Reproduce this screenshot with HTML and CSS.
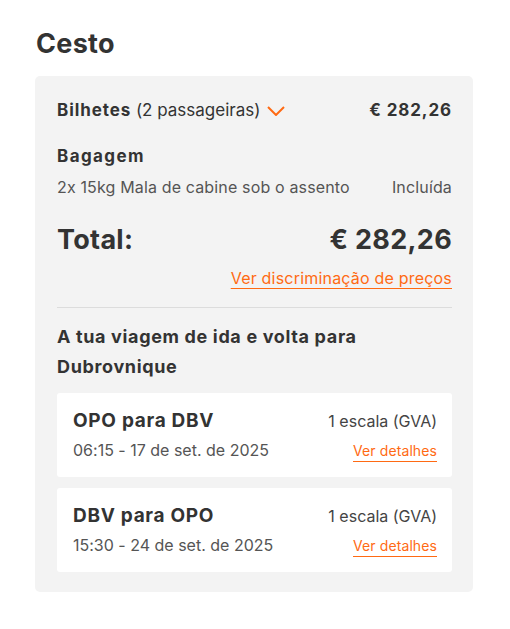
FILE: index.html
```html
<!DOCTYPE html>
<html lang="pt">
<head>
<meta charset="utf-8">
<link rel="stylesheet" href="styles.css">
</head>
<body>
<main class="basket">
  <h1 class="title">Cesto</h1>
  <section class="card">
    <div class="row tickets">
      <div class="tickets-label">
        <span><strong>Bilhetes</strong> (2 passageiras)</span>
        <svg class="chev" width="18" height="10" viewBox="0 0 18 10"><path d="M1 1 L9 9 L17 1" fill="none" stroke="#ff6a13" stroke-width="2"/></svg>
      </div>
      <div class="price">€ 282,26</div>
    </div>
    <div class="baggage">
      <div class="sub-title">Bagagem</div>
      <div class="row muted-row">
        <span>2x 15kg Mala de cabine sob o assento</span>
        <span>Incluída</span>
      </div>
    </div>
    <div class="row total">
      <span>Total:</span>
      <span>€ 282,26</span>
    </div>
    <div class="link-row"><a class="link" href="#">Ver discriminação de preços</a></div>
    <hr class="divider">
    <h2 class="trip-title">A tua viagem de ida e volta para Dubrovnique</h2>
    <div class="flights">
      <div class="flight">
        <div class="flight-left">
          <div class="route">OPO para DBV</div>
          <div class="date">06:15 - 17 de set. de 2025</div>
        </div>
        <div class="flight-right">
          <div class="stops">1 escala (GVA)</div>
          <a class="link small" href="#">Ver detalhes</a>
        </div>
      </div>
      <div class="flight">
        <div class="flight-left">
          <div class="route">DBV para OPO</div>
          <div class="date">15:30 - 24 de set. de 2025</div>
        </div>
        <div class="flight-right">
          <div class="stops">1 escala (GVA)</div>
          <a class="link small" href="#">Ver detalhes</a>
        </div>
      </div>
    </div>
  </section>
</main>
</body>
</html>
```
FILE: styles.css
```css
* { box-sizing: border-box; }
body {
  margin: 0;
  background: #fff;
  font-family: "Inter", "Open Sans", sans-serif;
  font-feature-settings: "calt" 0;
  color: #333;
}
.basket {
  padding: 28px 37px 0 35px;
}
.title {
  margin: 0 0 16px 1px;
  font-size: 27px;
  line-height: 32px;
  font-weight: 700;
  letter-spacing: 0.3px;
  color: #333;
}
.card {
  background: #f3f3f3;
  border-radius: 5px;
  padding: 22px 21px 20px 22px;
}
.row {
  display: flex;
  justify-content: space-between;
  align-items: center;
}
.tickets {
  font-size: 17px;
  line-height: 24px;
  color: #333;
}
.tickets strong { font-weight: 700; letter-spacing: 0.9px; }
.tickets-label { display: flex; align-items: center; }
.chev { margin-left: 7px; margin-top: 1px; }
.price { font-weight: 700; letter-spacing: 0.9px; }
.baggage { margin-top: 22px; }
.sub-title {
  font-size: 17px;
  line-height: 24px;
  font-weight: 700;
  letter-spacing: 1.4px;
}
.muted-row {
  margin-top: 8px;
  font-size: 16px;
  line-height: 22px;
  letter-spacing: 0.15px;
  color: #555;
}
.total {
  margin-top: 25px;
  font-size: 27px;
  line-height: 34px;
  font-weight: 700;
  letter-spacing: 0.3px;
}
.link-row {
  display: flex;
  justify-content: flex-end;
  margin-top: 10px;
}
.link {
  color: #ff6a13;
  font-size: 16px;
  line-height: 22px;
  letter-spacing: 0.2px;
  text-decoration: underline;
  text-underline-offset: 4px;
  text-decoration-thickness: 1px;
}
.divider {
  border: 0;
  border-top: 1px solid #dcdcdc;
  margin: 18px 0 0;
}
.trip-title {
  margin: 14px 0 0;
  max-width: 330px;
  font-size: 18px;
  line-height: 30px;
  font-weight: 700;
  letter-spacing: 0.65px;
}
.flights {
  margin-top: 11px;
  display: flex;
  flex-direction: column;
  gap: 11px;
}
.flight {
  background: #fff;
  border-radius: 3px;
  padding: 16px 15px 16px 16px;
  display: flex;
  justify-content: space-between;
  height: 84px;
}
.route {
  font-size: 19px;
  line-height: 24px;
  font-weight: 700;
  letter-spacing: 0.7px;
}
.date {
  margin-top: 5px;
  font-size: 16px;
  line-height: 24px;
  color: #555;
}
.flight-right {
  display: flex;
  flex-direction: column;
  align-items: flex-end;
}
.stops {
  font-size: 16px;
  line-height: 24px;
  color: #444;
}
.link.small {
  margin-top: 8px;
  font-size: 14px;
  line-height: 20px;
  letter-spacing: 0.1px;
  text-underline-offset: 5px;
}
```
